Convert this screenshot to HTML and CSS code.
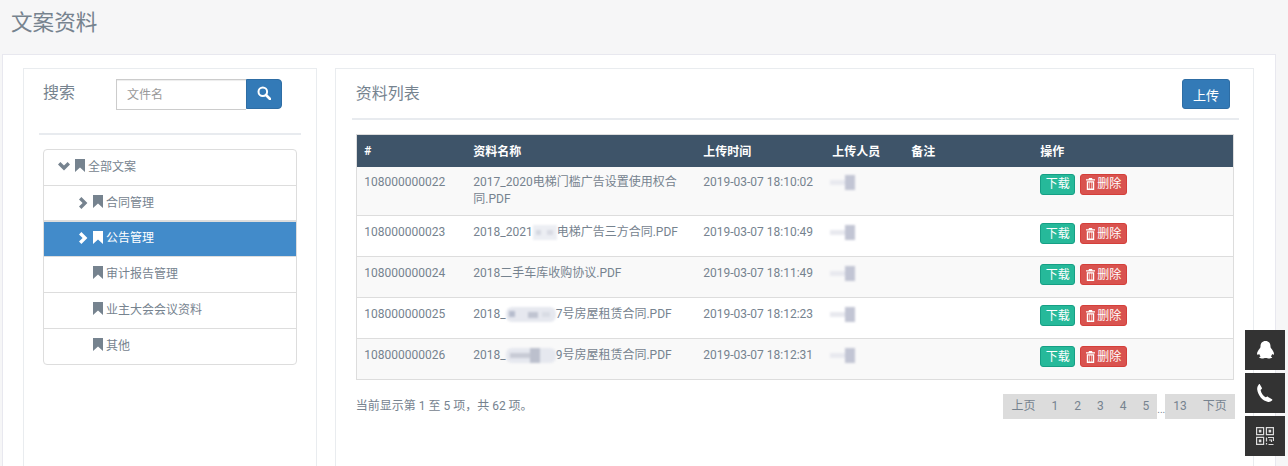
FILE: index.html
```html
<!DOCTYPE html>
<html lang="en">
<head>
    <meta charset="UTF-8">
    <meta name="viewport" content="width=device-width, initial-scale=1.0">
    <title>文案资料</title>
    <link rel="stylesheet" href="styles.css">
</head>
<body>
    <svg class="defs" width="0" height="0">
        <symbol id="i-bookmark" viewBox="0 0 10 13"><path d="M0 0h10v13L5 8.600 0 13z"/></symbol>
        <symbol id="i-right" viewBox="0 0 9 12"><path d="M2.400 0 8.400 6l-6 6L0 9.600 3.600 6 0 2.400z"/></symbol>
        <symbol id="i-down" viewBox="0 0 12 9"><path d="M0 2.400 2.400 0 6 3.600 9.600 0 12 2.400l-6 6z"/></symbol>
        <symbol id="i-trash" viewBox="0 0 9 12"><path d="M3 0h3l.5 1.200H9v1.300H0V1.200h2.500zM.8 3.300h7.400V12H.8zm1.400 1.200v6h1.200v-6zm1.700 0v6h1.200v-6zm1.700 0v6h1.200v-6z"/></symbol>
    </svg>

    <h1 class="page-title">文案资料</h1>

    <div class="wrapper">
        <div class="side panel">
            <div class="search-row">
                <label class="search-label">搜索</label>
                <div class="search-box">
                    <input class="search-input" type="text" placeholder="文件名">
                    <button class="search-btn">
                        <svg width="14" height="14" viewBox="0 0 14 14" fill="none" stroke="#fff"><circle cx="5.800" cy="5.800" r="4.300" stroke-width="2"/><path d="M9 9l4 4" stroke-width="2.600" stroke-linecap="round"/></svg>
                    </button>
                </div>
            </div>
            <div class="side-line"></div>
            <ul class="tree">
                <li class="tree-item"><svg class="arrow arrow-down"><use href="#i-down"/></svg><svg class="mark"><use href="#i-bookmark"/></svg>全部文案</li>
                <li class="tree-item level-1 second"><svg class="arrow"><use href="#i-right"/></svg><svg class="mark"><use href="#i-bookmark"/></svg>合同管理</li>
                <li class="tree-item level-1 active"><svg class="arrow"><use href="#i-right"/></svg><svg class="mark"><use href="#i-bookmark"/></svg>公告管理</li>
                <li class="tree-item level-1 leaf"><svg class="mark"><use href="#i-bookmark"/></svg>审计报告管理</li>
                <li class="tree-item level-1 leaf"><svg class="mark"><use href="#i-bookmark"/></svg>业主大会会议资料</li>
                <li class="tree-item level-1 leaf"><svg class="mark"><use href="#i-bookmark"/></svg>其他</li>
            </ul>
        </div>

        <div class="main panel">
            <div class="main-head">
                <h2 class="main-title">资料列表</h2>
                <button class="upload-btn">上传</button>
            </div>
            <table class="list">
                <colgroup>
                    <col class="col-id"><col class="col-name"><col class="col-time"><col class="col-user"><col class="col-note"><col>
                </colgroup>
                <thead>
                    <tr><th>#</th><th>资料名称</th><th>上传时间</th><th>上传人员</th><th>备注</th><th>操作</th></tr>
                </thead>
                <tbody>
                    <tr class="odd">
                        <td>108000000022</td>
                        <td>2017_2020电梯门槛广告设置使用权合同.PDF</td>
                        <td>2019-03-07 18:10:02</td>
                        <td><span class="mask mask-user"></span></td>
                        <td></td>
                        <td class="ops"><a class="btn-down">下载</a><a class="btn-del"><svg class="trash"><use href="#i-trash"/></svg>删除</a></td>
                    </tr>
                    <tr>
                        <td>108000000023</td>
                        <td>2018_2021<span class="mask mask-a"></span>电梯广告三方合同.PDF</td>
                        <td>2019-03-07 18:10:49</td>
                        <td><span class="mask mask-user"></span></td>
                        <td></td>
                        <td class="ops"><a class="btn-down">下载</a><a class="btn-del"><svg class="trash"><use href="#i-trash"/></svg>删除</a></td>
                    </tr>
                    <tr class="odd">
                        <td>108000000024</td>
                        <td>2018二手车库收购协议.PDF</td>
                        <td>2019-03-07 18:11:49</td>
                        <td><span class="mask mask-user"></span></td>
                        <td></td>
                        <td class="ops"><a class="btn-down">下载</a><a class="btn-del"><svg class="trash"><use href="#i-trash"/></svg>删除</a></td>
                    </tr>
                    <tr>
                        <td>108000000025</td>
                        <td>2018_<span class="mask mask-b"></span>7号房屋租赁合同.PDF</td>
                        <td>2019-03-07 18:12:23</td>
                        <td><span class="mask mask-user"></span></td>
                        <td></td>
                        <td class="ops"><a class="btn-down">下载</a><a class="btn-del"><svg class="trash"><use href="#i-trash"/></svg>删除</a></td>
                    </tr>
                    <tr class="odd">
                        <td>108000000026</td>
                        <td>2018_<span class="mask mask-c"></span>9号房屋租赁合同.PDF</td>
                        <td>2019-03-07 18:12:31</td>
                        <td><span class="mask mask-user"></span></td>
                        <td></td>
                        <td class="ops"><a class="btn-down">下载</a><a class="btn-del"><svg class="trash"><use href="#i-trash"/></svg>删除</a></td>
                    </tr>
                </tbody>
            </table>
            <div class="list-foot">
                <div class="info">当前显示第 1 至 5 项，共 62 项。</div>
                <div class="pager">
                    <div class="pager-group"><a>上页</a><a>1</a><a>2</a><a>3</a><a>4</a><a>5</a></div>
                    <span class="dots">...</span>
                    <div class="pager-group"><a>13</a><a>下页</a></div>
                </div>
            </div>
        </div>
    </div>

    <div class="float-bar">
        <div class="float-btn">
            <svg width="17" height="18" viewBox="0 0 17 18" fill="#fff"><path d="M8.500 0c3.300 0 5 2.400 5 5.200 0 1 .2 1.500.8 2.300 1.300 1.800 2.700 3.700 2.700 5.400 0 1-.7 1.100-1.800.1-.3.900-.7 1.700-1.400 2.400.8.300 1.500.7 1.400 1.200-.2.600-1.600.9-3.100.8-1.300-.1-2-.5-3.400-.5s-2.100.4-3.400.5c-1.500.1-2.900-.2-3.100-.8-.1-.5.6-.9 1.400-1.200-.7-.7-1.100-1.500-1.400-2.400C1.100 14 0 13.900 0 12.900c0-1.700 1.400-3.600 2.700-5.400.6-.8.800-1.300.8-2.300C3.500 2.400 5.200 0 8.500 0z"/></svg>
        </div>
        <div class="float-btn">
            <svg width="16" height="18" viewBox="0 0 16 18" fill="#fff"><path d="M2.800.2 4.800 3.700c.3.500.2 1-.2 1.300l-1 .9c.5 3 2.500 6 5 7.400l1.300-.6c.4-.2.900-.1 1.200.2l3.900 2.400c.5.400.4.900 0 1.300-1 .9-2.300 1.500-3.800 1.300C5.600 17.400 1 11.500.2 5.600 0 3.700.7 1.700 1.800.4 2.100 0 2.500 0 2.800.2z"/></svg>
        </div>
        <div class="float-btn">
            <svg width="18" height="18" viewBox="0 0 18 18" fill="none" stroke="#ddd" stroke-width="1.200"><path d="M.6.600h7v7h-7zM10.400.600h7v7h-7zM.6 10.400h7v7h-7z"/><path d="M2.800 2.800h2.600v2.600H2.800zM12.600 2.800h2.600v2.600h-2.600zM2.800 12.600h2.600v2.600H2.800z" fill="#ddd" stroke="none"/><path d="M12 10.500h5.500v3.500M10.500 10.500v4M10.500 16v1.500M13 13h2.500v2M12.500 17.500h5"/></svg>
        </div>
    </div>
</body>
</html>
```

FILE: styles.css
```css
* { box-sizing: border-box; }
html, body { height: 100%; }
body {
    margin: 0;
    overflow: hidden;
    background: #f6f6f7;
    color: #76838f;
    font-family: Roboto, "Noto Sans CJK SC", sans-serif;
    font-size: 12px;
}
.defs { position: absolute; }
.page-title {
    margin: 0;
    height: 54px;
    padding: 8px 0 0 11px;
    font-size: 21.600px;
    line-height: 30px;
    font-weight: 400;
}
.wrapper {
    display: flex;
    gap: 18px;
    width: 1274px;
    height: 412px;
    margin-left: 2px;
    padding: 13px 21px 0 20px;
    background: #fff;
    border: 1px solid #e8e8ef;
    border-bottom: 0;
}
.panel {
    background: #fff;
    border: 1px solid #e9ecef;
    border-bottom: 0;
}
.side { width: 294px; padding: 10px 15px 0; }
.main { width: 920px; padding: 10px 14px 0 16px; }

/* search */
.search-row { display: flex; align-items: flex-start; padding-left: 4px; }
.search-label { width: 73px; padding-top: 1px; font-size: 16px; line-height: 26px; }
.search-box { display: flex; }
.search-input {
    width: 130px;
    height: 31px;
    padding: 1px 10px 0;
    border: 1px solid #ccc;
    border-right: 0;
    font: inherit;
    box-shadow: inset 0 1px 1px rgba(0,0,0,.075);
    outline: none;
}
.search-input::placeholder { color: #999; }
.search-btn {
    display: flex;
    align-items: center;
    justify-content: center;
    width: 36px;
    height: 30px;
    padding: 0 0 2px;
    background: #337ab7;
    border: 1px solid #2e6da4;
    border-radius: 0 4px 4px 0;
}
.side-line { height: 2px; margin: 23px 0 14px; background: #e8ebef; }

/* tree */
.tree {
    list-style: none;
    margin: 0 0 0 4px;
    padding: 0;
    width: 254px;
    border: 1px solid #ddd;
    border-radius: 4px;
}
.tree-item {
    display: flex;
    align-items: center;
    height: 36px;
    padding: 0 0 2px 14px;
    border-top: 1px solid #ddd;
    line-height: 16px;
}
.tree-item:first-child { border-top: 0; height: 35px; }
.level-1 { padding-left: 34px; }
.second { height: 35px; padding-bottom: 1px; }
.leaf { padding-left: 48px; }
.active { background: #428bca; color: #fff; border-top: 2px solid #ddd; }
.arrow { width: 9px; height: 12px; margin-right: 5px; fill: #76838f; }
.arrow-down { width: 12px; height: 9px; margin-right: 4px; }
.active .arrow { fill: #fff; }
.mark { width: 10px; height: 13px; margin: -2px 3px 0 0; fill: #76838f; }
.active .mark { fill: #fff; }
.tree-item:first-child .mark { margin-left: 1px; }
.level-1 .arrow { margin-left: 1px; }
.leaf .mark { margin-left: 1px; }

/* main */
.main-head {
    display: flex;
    justify-content: space-between;
    align-items: flex-start;
    height: 41px;
    padding-left: 4px;
    border-bottom: 2px solid #e8ebef;
}
.main-title { margin: 3px 0 0; font-size: 16px; line-height: 24px; font-weight: 400; }
.upload-btn {
    width: 48px;
    height: 30px;
    margin-right: 9px;
    padding: 0;
    background: #337ab7;
    border: 1px solid #2e6da4;
    border-radius: 3px;
    color: #fff;
    font: inherit;
    font-size: 13px;
}
.list {
    width: 878px;
    margin: 14px 0 0 4px;
    border-collapse: collapse;
    table-layout: fixed;
    border: 1px solid #ddd;
}
.col-id { width: 109px; }
.col-name { width: 230px; }
.col-time { width: 129px; }
.col-user { width: 79px; }
.col-note { width: 129px; }
.list th {
    height: 32px;
    padding: 0 8px;
    background: #3e5469;
    color: #fff;
    font-weight: 700;
    text-align: left;
    vertical-align: middle;
}
.list td {
    padding: 8px 8px 0;
    height: 41px;
    line-height: 17px;
    vertical-align: top;
    border-top: 1px solid #ddd;
}
.list th:first-child, .list td:first-child { padding-left: 7.500px; }
.list tbody tr:first-child td { border-top: 0; height: 49px; padding-top: 7px; }
.odd td { background: #f9f9f9; }
.list .ops { padding-top: 7px; }
.btn-down, .btn-del {
    display: inline-flex;
    align-items: center;
    height: 21px;
    padding: 1px 4.500px 0;
    border-radius: 3px;
    color: #fff;
    vertical-align: top;
}
.btn-down { background: #26b99a; border: 1px solid #169f85; margin-right: 5px; }
.btn-del { background: #d9534f; border: 1px solid #d43f3a; }
.trash { width: 9px; height: 12px; margin: -1px 2.500px 0 0; fill: #fff; }

/* masks over names: pale bar with a couple of darker mosaic blocks */
.mask {
    display: inline-block;
    height: 15px;
    vertical-align: -4px;
    background-repeat: no-repeat;
    filter: blur(1.200px);
}
.mask-a {
    width: 24px;
    background-color: #eceef3;
    background-image: linear-gradient(#d5d8e1, #d5d8e1), linear-gradient(#d9dbe4, #d9dbe4);
    background-size: 5px 5px, 6px 5px;
    background-position: 3px 5px, 14px 5px;
}
.mask-b {
    width: 50px;
    border-radius: 6px;
    background-color: #e6e8ef;
    background-image: linear-gradient(#b6bccd, #b6bccd), linear-gradient(#c0c4d1, #c0c4d1), linear-gradient(#d9dce4, #d9dce4);
    background-size: 6px 6px, 10px 6px, 8px 5px;
    background-position: 3px 4px, 22px 5px, 36px 5px;
}
.mask-c {
    width: 50px;
    border-radius: 6px;
    background-color: #e6e8ef;
    background-image: linear-gradient(#bcc0cd, #bcc0cd), linear-gradient(#c8cbd5, #c8cbd5);
    background-size: 10px 15px, 22px 5px;
    background-position: 24px 0, 4px 5px;
}
.mask-user {
    width: 30px;
    margin: 1px 0 0 -2px;
    vertical-align: top;
    background-image: linear-gradient(#c2c5d4, #c2c5d4), linear-gradient(#e8e9ef, #e8e9ef);
    background-size: 10px 15px, 20px 5px;
    background-position: 15px 0, 0 5px;
}

/* foot */
.list-foot {
    display: flex;
    justify-content: space-between;
    align-items: flex-start;
    margin: 14px 0 0 4px;
    width: 879px;
}
.info { line-height: 24px; }
.pager { display: flex; align-items: flex-start; }
.pager-group { display: flex; height: 25px; background: #dcdcdc; line-height: 25px; }
.pager-group a { padding: 0 8px; }
.dots { width: 8px; padding-top: 8px; font-size: 10px; line-height: 15px; }

/* float bar */
.float-bar {
    position: fixed;
    right: 3px;
    top: 330px;
    display: flex;
    flex-direction: column;
    gap: 3px;
}
.float-btn {
    display: flex;
    align-items: center;
    justify-content: center;
    width: 40px;
    height: 40px;
    background: #333;
}
```
